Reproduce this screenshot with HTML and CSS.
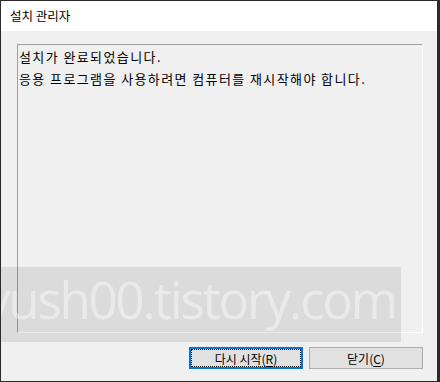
FILE: index.html
```html
<!DOCTYPE html>
<html>
<head>
  <title>설치 관리자</title>
  <link rel="stylesheet" href="styles.css">
</head>
<body>

  <div class="window">
    <div class="title-bar">설치 관리자</div>

    <div class="content">
      <div class="message-box">
        <p>설치가 완료되었습니다.</p>
        <p>응용 프로그램을 사용하려면 컴퓨터를 재시작해야 합니다.</p>
      </div>

      <div class="button-row">
        <button class="btn btn-default">다시 시작(<u>R</u>)</button>
        <button class="btn">닫기(<u>C</u>)</button>
      </div>
    </div>

    <div class="watermark"><span>yush00.tistory.com</span></div>
  </div>

</body>
</html>
```

FILE: styles.css
```css
body {
  margin: 0;
  padding: 1px 3px 1px 1px;
  background-color: #2b2b2b;
  font-family: 'Noto Sans CJK KR', 'Noto Sans', sans-serif;
  font-size: 12px;
  color: #000;
}

.window {
  position: relative;
  width: 436px;
  height: 380px;
  background: #f0f0f0;
  display: flex;
  flex-direction: column;
  overflow: hidden;
}

.title-bar {
  height: 30px;
  line-height: 29px;
  padding-left: 9px;
  background: #fff;
  font-size: 12.5px;
  flex-shrink: 0;
}

.content {
  flex: 1;
  display: flex;
  flex-direction: column;
  padding: 13px 14px 12px 16px;
}

.message-box {
  height: 289px;
  box-sizing: border-box;
  border-top: 1px solid #a0a0a0;
  border-left: 1px solid #a0a0a0;
  border-right: 1px solid #fff;
  border-bottom: 1px solid #fff;
  padding: 1px 0 0 1px;
}

.message-box p {
  margin: 0;
  font-size: 13px;
  line-height: 22px;
  letter-spacing: 1.4px;
}

.button-row {
  display: flex;
  justify-content: flex-end;
  gap: 6px;
  margin-top: 14px;
}

.btn {
  width: 114px;
  height: 22px;
  box-sizing: border-box;
  padding: 0;
  background: #e1e1e1;
  border: 1px solid #adadad;
  font-family: inherit;
  font-size: 12px;
  color: #000;
}

.btn-default {
  border: 2px solid #0078d7;
  outline: 1px dotted #000;
  outline-offset: -3px;
}

.btn u {
  text-underline-offset: 2px;
}

.watermark {
  position: absolute;
  left: 0;
  top: 266px;
  width: 400px;
  height: 75px;
  background: rgba(0, 0, 0, 0.085);
  overflow: hidden;
}

.watermark span {
  display: block;
  margin: 7px 0 0 -16px;
  font-family: 'Open Sans', sans-serif;
  font-size: 51px;
  line-height: 51px;
  letter-spacing: -2.2px;
  white-space: nowrap;
  color: rgba(255, 255, 255, 0.42);
}
```
